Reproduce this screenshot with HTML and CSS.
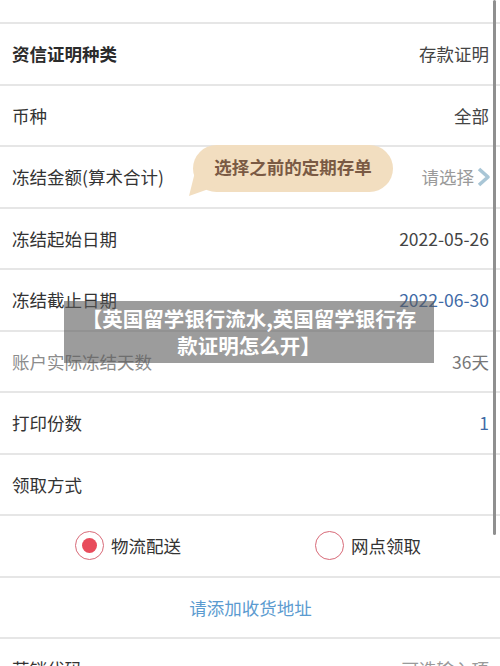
FILE: index.html
```html
<!DOCTYPE html>
<html lang="zh-CN">
<head>
  <meta charset="UTF-8">
  <meta name="viewport" content="width=device-width, initial-scale=1.0">
  <title>资信证明</title>
  <link rel="stylesheet" href="styles.css">
</head>
<body>
  <div class="list">
    <div class="row row-top">
      <span class="label">证明用途</span>
      <span class="value">留学</span>
    </div>
    <div class="row">
      <span class="label bold">资信证明种类</span>
      <span class="value">存款证明</span>
    </div>
    <div class="row">
      <span class="label">币种</span>
      <span class="value">全部</span>
    </div>
    <div class="row row-tip">
      <span class="label">冻结金额(算术合计)</span>
      <span class="value muted">请选择
        <svg class="chevron" width="15" height="20" viewBox="0 0 15 20">
          <polyline points="3,2 12,10 3,18" fill="none" stroke="#a9c6d6" stroke-width="3.6" stroke-linejoin="round"/>
        </svg>
      </span>
      <!-- 气泡提示 -->
      <div class="bubble">选择之前的定期存单</div>
    </div>
    <div class="row">
      <span class="label">冻结起始日期</span>
      <span class="value">2022-05-26</span>
    </div>
    <div class="row">
      <span class="label">冻结截止日期</span>
      <span class="value blue">2022-06-30</span>
    </div>
    <div class="row">
      <span class="label light">账户实际冻结天数</span>
      <span class="value grey">36天</span>
    </div>
    <div class="row">
      <span class="label">打印份数</span>
      <span class="value blue">1</span>
    </div>
    <div class="row">
      <span class="label">领取方式</span>
    </div>
    <div class="row radios">
      <label class="radio">
        <span class="circle checked"></span>物流配送
      </label>
      <label class="radio">
        <span class="circle"></span>网点领取
      </label>
    </div>
    <div class="row center">
      <span class="link">请添加收货地址</span>
    </div>
    <div class="row">
      <span class="label">营销代码</span>
      <span class="value muted">可选输入项</span>
    </div>
  </div>

  <div class="scrollbar"></div>

  <div class="banner">【英国留学银行流水,英国留学银行存<br>款证明怎么开】</div>
</body>
</html>
```

FILE: styles.css
```css
/* Base */
* {
  box-sizing: border-box;
  margin: 0;
  padding: 0;
}
body {
  font-family: "Noto Sans CJK SC", "Noto Sans", sans-serif;
  background: #fff;
  color: #333;
  width: 500px;
  height: 666px;
  overflow: hidden;
  position: relative;
}

/* Lista */
.list {
  display: flex;
  flex-direction: column;
}
.row {
  height: 61.5px;
  border-bottom: 2px solid #e6e6e6;
  display: flex;
  align-items: center;
  justify-content: space-between;
  padding: 0 11px 0 12px;
  font-size: 17.5px;
}
.row-top {
  margin-top: -37.5px;
  padding-bottom: 8px;
  color: #777;
}
.row-tip {
  position: relative;
}
.label {
  color: #333;
}
.label.bold {
  font-weight: bold;
  color: #2b2b2b;
}
.label.light {
  color: #8c8c8c;
}
.value {
  color: #444;
  display: flex;
  align-items: center;
}
.value.muted {
  color: #9a9a9a;
}
.value.grey {
  color: #777;
}
.value.blue {
  color: #3f6aa6;
}
.chevron {
  margin-left: 2px;
  margin-right: -2px;
}

/* Bubble */
.bubble {
  position: absolute;
  left: 193px;
  top: -2px;
  width: 200px;
  height: 47px;
  border-radius: 24px;
  background: #f2dec0;
  color: #7a5a44;
  font-weight: bold;
  font-size: 17.5px;
  display: flex;
  align-items: center;
  justify-content: center;
  padding-bottom: 4px;
}
.bubble::before {
  content: "";
  position: absolute;
  left: -4px;
  top: 20px;
  width: 26px;
  height: 31px;
  background: #f2dec0;
  clip-path: polygon(0 100%, 30% 0, 100% 70%);
}

/* Radio */
.radios {
  display: grid;
  grid-template-columns: 1fr 1fr;
  padding: 0 12px 0 8px;
}
.radio {
  display: flex;
  align-items: center;
  justify-content: center;
  gap: 7px;
  color: #333;
}
.circle {
  width: 29px;
  height: 29px;
  border-radius: 50%;
  border: 1.5px solid #d86a78;
  display: flex;
  align-items: center;
  justify-content: center;
}
.circle.checked::after {
  content: "";
  width: 15px;
  height: 15px;
  border-radius: 50%;
  background: #e84c5c;
}

.center {
  justify-content: center;
}
.link {
  color: #5b9bd0;
}

/* Overlay */
.scrollbar {
  position: absolute;
  right: 4px;
  top: 0;
  width: 3px;
  height: 535px;
  border-radius: 2px;
  background: #8f8f8f;
}
.banner {
  position: absolute;
  left: 64px;
  top: 301px;
  width: 370px;
  height: 62px;
  background: rgba(90, 90, 90, 0.6);
  color: #fff;
  font-weight: bold;
  font-size: 20.5px;
  line-height: 27px;
  text-align: center;
  padding-top: 4px;
}
```
